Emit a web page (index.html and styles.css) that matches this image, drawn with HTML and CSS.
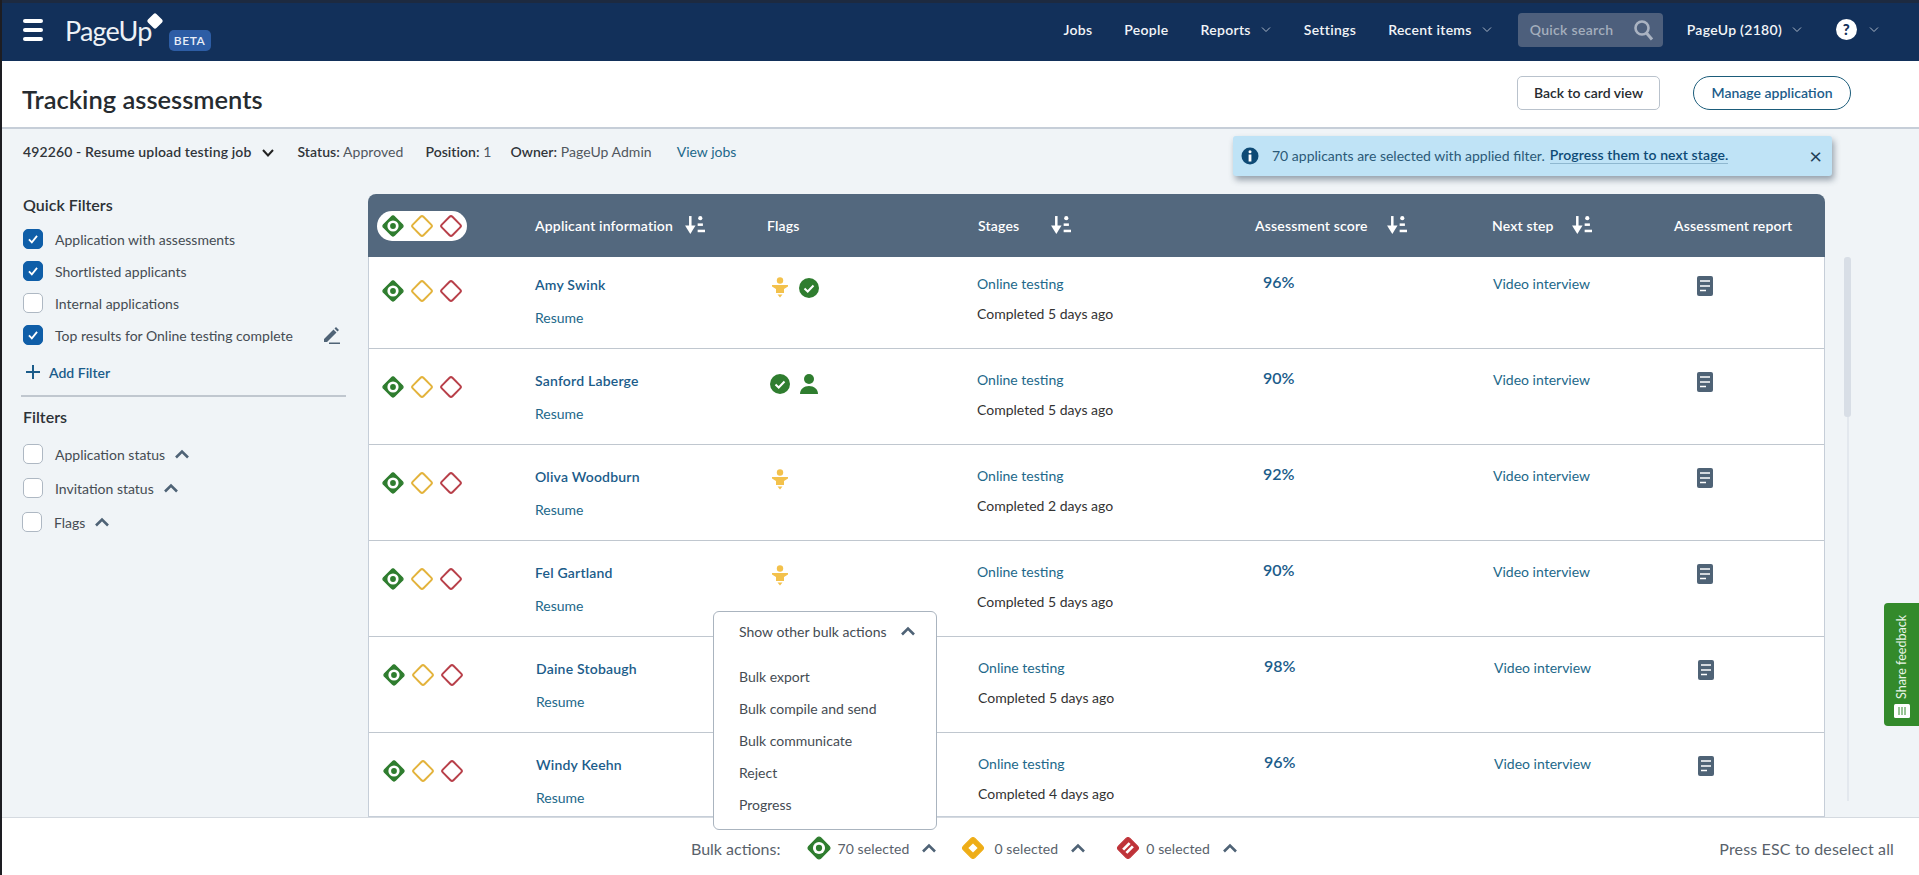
FILE: index.html
```html
<!DOCTYPE html>
<html lang="en">
<head>
<meta charset="utf-8">
<title>Tracking assessments</title>
<link rel="stylesheet" href="styles.css">
</head>
<body>
<svg class="defs" width="0" height="0" aria-hidden="true">
  <symbol id="d-green" viewBox="0 0 24 24"><rect x="4.2" y="4.2" width="15.6" height="15.6" rx="2.5" transform="rotate(45 12 12)" fill="#2f7d2f" stroke="#2f7d2f" stroke-width="1"/><circle cx="12" cy="12" r="5.6" fill="#fff"/><circle cx="12" cy="12" r="2.9" fill="#2f7d2f"/></symbol>
  <symbol id="d-yellow" viewBox="0 0 24 24"><rect x="4.5" y="4.5" width="15" height="15" rx="2" transform="rotate(45 12 12)" fill="#fff" stroke="#e3b33c" stroke-width="2"/></symbol>
  <symbol id="d-red" viewBox="0 0 24 24"><rect x="4.5" y="4.5" width="15" height="15" rx="2" transform="rotate(45 12 12)" fill="#fff" stroke="#b8404a" stroke-width="2"/></symbol>
  <symbol id="f-yellow" viewBox="0 0 24 24"><rect x="4.5" y="4.5" width="15" height="15" rx="2.5" transform="rotate(45 12 12)" fill="#eead17" stroke="#eead17"/><rect x="9" y="9" width="6" height="6" transform="rotate(45 12 12)" fill="#fff"/></symbol>
  <symbol id="f-red" viewBox="0 0 24 24"><rect x="4.5" y="4.5" width="15" height="15" rx="2.5" transform="rotate(45 12 12)" fill="#bf3339" stroke="#bf3339"/><path d="M7.5 13.5 13.5 7.5M10.5 16.5 16.5 10.5" stroke="#fff" stroke-width="2.6"/></symbol>
  <symbol id="sort" viewBox="0 0 20 20"><path d="M6 1v14" stroke="#fff" stroke-width="2.4"/><path d="M1 10 6 18l5-8z" fill="#fff"/><circle cx="15.500" cy="3" r="2" fill="#fff"/><rect x="13" y="8" width="5" height="2.400" fill="#fff"/><rect x="13" y="14" width="7" height="2.400" fill="#fff"/></symbol>
  <symbol id="up" viewBox="0 0 16 10"><path d="M2 8.500 8 2.500l6 6" fill="none" stroke="#4f6376" stroke-width="2.600"/></symbol>
  <symbol id="down" viewBox="0 0 10 7"><path d="M1 1.500 5 5.500l4-4" fill="none" stroke="#aab6c6" stroke-width="1"/></symbol>
  <symbol id="tick" viewBox="0 0 22 22"><circle cx="11" cy="11" r="10" fill="#2f7d2f"/><path d="M6.500 11.500 9.700 14.500 15.500 8.500" fill="none" stroke="#fff" stroke-width="2"/></symbol>
  <symbol id="person" viewBox="0 0 22 22"><circle cx="11" cy="6" r="5" fill="#2f7d2f"/><path d="M2 21c0-5 4-8 9-8s9 3 9 8z" fill="#2f7d2f"/></symbol>
  <symbol id="pin" viewBox="0 0 22 22"><circle cx="11" cy="3.500" r="3.200" fill="#f3c14b"/><path d="M3 8h16v1.500l-4 2.500v4H7v-4L3 9.500z" fill="#f3c14b"/><path d="M8.500 17.500h5l-2.500 3z" fill="#f3c14b"/></symbol>
  <symbol id="doc" viewBox="0 0 16 20"><rect width="16" height="20" rx="2" fill="#4f6376"/><path d="M3 5h10M3 10h10M3 14.500h6" stroke="#fff" stroke-width="1.500"/></symbol>
  <symbol id="check" viewBox="0 0 20 20"><path d="M5.500 10.500 8.700 13.700 14.500 6.500" fill="none" stroke="#fff" stroke-width="2"/></symbol>
</svg>

<div class="app">
  <header class="topbar">
    <div class="burger"><span></span><span></span><span></span></div>
    <div class="logo"><span class="logo-text">PageUp</span><span class="logo-dot"></span></div>
    <span class="beta">BETA</span>
    <nav class="nav">
      <a class="nav-link n-jobs">Jobs</a>
      <a class="nav-link n-people">People</a>
      <a class="nav-link n-reports">Reports<svg class="nav-chev"><use href="#down"/></svg></a>
      <a class="nav-link n-settings">Settings</a>
      <a class="nav-link n-recent">Recent items<svg class="nav-chev"><use href="#down"/></svg></a>
      <div class="search"><span>Quick search</span>
        <svg class="search-ico" viewBox="0 0 22 22"><circle cx="9" cy="9" r="6.500" fill="none" stroke="#aab3c2" stroke-width="2.600"/><path d="M13.500 14 19 20.500" stroke="#aab3c2" stroke-width="3"/></svg>
      </div>
      <a class="nav-link n-acct">PageUp (2180)<svg class="nav-chev"><use href="#down"/></svg></a>
      <span class="help">?</span><svg class="nav-chev help-chev"><use href="#down"/></svg>
    </nav>
  </header>

  <section class="titlebar">
    <h1>Tracking assessments</h1>
    <div class="title-actions">
      <button class="btn btn-plain">Back to card view</button>
      <button class="btn btn-outline">Manage application</button>
    </div>
  </section>

  <main class="main">
    <div class="jobrow">
      <b class="job-name">492260 - Resume upload testing job</b>
      <svg class="job-chev" viewBox="0 0 14 10"><path d="M2 2l5 5.500L12 2" fill="none" stroke="#222" stroke-width="2"/></svg>
      <span class="meta m-status"><b>Status:</b> Approved</span>
      <span class="meta m-pos"><b>Position:</b> 1</span>
      <span class="meta m-owner"><b>Owner:</b> PageUp Admin</span>
      <a class="link m-view">View jobs</a>
    </div>

    <div class="alert">
      <svg class="alert-ico" viewBox="0 0 18 18"><circle cx="9" cy="9" r="8.500" fill="#0d4a75"/><circle cx="9" cy="4.800" r="1.500" fill="#fff"/><rect x="7.600" y="7.500" width="2.800" height="7" fill="#fff"/></svg>
      <span class="alert-text">70 applicants are selected with applied filter.</span>
      <a class="alert-link">Progress them to next stage.</a>
      <span class="alert-x">×</span>
    </div>

    <div class="content">
      <aside class="sidebar">
        <h2 class="side-title">Quick Filters</h2>
        <div class="fil"><span class="cb on"><svg><use href="#check"/></svg></span>Application with assessments</div>
        <div class="fil"><span class="cb on"><svg><use href="#check"/></svg></span>Shortlisted applicants</div>
        <div class="fil"><span class="cb"></span>Internal applications</div>
        <div class="fil"><span class="cb on"><svg><use href="#check"/></svg></span>Top results for Online testing complete
          <svg class="pencil" viewBox="0 0 20 20"><path d="M3 14 12.500 4.500l3 3L6 17H3zM13.500 3.500l1.500-1.500 3 3-1.500 1.500z" fill="#4f6376"/><rect x="8" y="17.500" width="11" height="1.500" fill="#4f6376"/></svg>
        </div>
        <a class="add"><svg class="plus" viewBox="0 0 14 14"><path d="M7 0v14M0 7h14" stroke="#1b5c8a" stroke-width="2"/></svg>Add Filter</a>
        <hr class="divider">
        <h2 class="side-title t-filters">Filters</h2>
        <div class="fil f2"><span class="cb"></span>Application status<svg class="up"><use href="#up"/></svg></div>
        <div class="fil f2"><span class="cb"></span>Invitation status<svg class="up"><use href="#up"/></svg></div>
        <div class="fil f2 f-flags"><span class="cb"></span>Flags<svg class="up"><use href="#up"/></svg></div>
      </aside>

      <div class="table">
        <div class="thead">
          <div class="pill"><svg class="dia"><use href="#d-green"/></svg><svg class="dia"><use href="#d-yellow"/></svg><svg class="dia"><use href="#d-red"/></svg></div>
          <div class="th">Applicant information<svg class="sort s1"><use href="#sort"/></svg></div>
          <div class="th">Flags</div>
          <div class="th">Stages<svg class="sort s2"><use href="#sort"/></svg></div>
          <div class="th">Assessment score<svg class="sort s4"><use href="#sort"/></svg></div>
          <div class="th">Next step<svg class="sort s3"><use href="#sort"/></svg></div>
          <div class="th">Assessment report</div>
        </div>
        <div class="rows">
          <div class="row">
            <div class="c-dia"><svg class="dia"><use href="#d-green"/></svg><svg class="dia"><use href="#d-yellow"/></svg><svg class="dia"><use href="#d-red"/></svg></div>
            <div class="c-app"><a class="name">Amy Swink</a><a class="link resume">Resume</a></div>
            <div class="c-flags"><svg class="flag"><use href="#pin"/></svg><svg class="flag"><use href="#tick"/></svg></div>
            <div class="c-stage"><a class="link">Online testing</a><span class="done">Completed 5 days ago</span></div>
            <div class="c-score">96%</div>
            <div class="c-next"><a class="link">Video interview</a></div>
            <div class="c-doc"><svg class="doc"><use href="#doc"/></svg></div>
          </div>
          <div class="row">
            <div class="c-dia"><svg class="dia"><use href="#d-green"/></svg><svg class="dia"><use href="#d-yellow"/></svg><svg class="dia"><use href="#d-red"/></svg></div>
            <div class="c-app"><a class="name">Sanford Laberge</a><a class="link resume">Resume</a></div>
            <div class="c-flags"><svg class="flag"><use href="#tick"/></svg><svg class="flag"><use href="#person"/></svg></div>
            <div class="c-stage"><a class="link">Online testing</a><span class="done">Completed 5 days ago</span></div>
            <div class="c-score">90%</div>
            <div class="c-next"><a class="link">Video interview</a></div>
            <div class="c-doc"><svg class="doc"><use href="#doc"/></svg></div>
          </div>
          <div class="row">
            <div class="c-dia"><svg class="dia"><use href="#d-green"/></svg><svg class="dia"><use href="#d-yellow"/></svg><svg class="dia"><use href="#d-red"/></svg></div>
            <div class="c-app"><a class="name">Oliva Woodburn</a><a class="link resume">Resume</a></div>
            <div class="c-flags"><svg class="flag"><use href="#pin"/></svg></div>
            <div class="c-stage"><a class="link">Online testing</a><span class="done">Completed 2 days ago</span></div>
            <div class="c-score">92%</div>
            <div class="c-next"><a class="link">Video interview</a></div>
            <div class="c-doc"><svg class="doc"><use href="#doc"/></svg></div>
          </div>
          <div class="row">
            <div class="c-dia"><svg class="dia"><use href="#d-green"/></svg><svg class="dia"><use href="#d-yellow"/></svg><svg class="dia"><use href="#d-red"/></svg></div>
            <div class="c-app"><a class="name">Fel Gartland</a><a class="link resume">Resume</a></div>
            <div class="c-flags"><svg class="flag"><use href="#pin"/></svg></div>
            <div class="c-stage"><a class="link">Online testing</a><span class="done">Completed 5 days ago</span></div>
            <div class="c-score">90%</div>
            <div class="c-next"><a class="link">Video interview</a></div>
            <div class="c-doc"><svg class="doc"><use href="#doc"/></svg></div>
          </div>
          <div class="row row-shift">
            <div class="c-dia"><svg class="dia"><use href="#d-green"/></svg><svg class="dia"><use href="#d-yellow"/></svg><svg class="dia"><use href="#d-red"/></svg></div>
            <div class="c-app"><a class="name">Daine Stobaugh</a><a class="link resume">Resume</a></div>
            <div class="c-flags"></div>
            <div class="c-stage"><a class="link">Online testing</a><span class="done">Completed 5 days ago</span></div>
            <div class="c-score">98%</div>
            <div class="c-next"><a class="link">Video interview</a></div>
            <div class="c-doc"><svg class="doc"><use href="#doc"/></svg></div>
          </div>
          <div class="row row-shift">
            <div class="c-dia"><svg class="dia"><use href="#d-green"/></svg><svg class="dia"><use href="#d-yellow"/></svg><svg class="dia"><use href="#d-red"/></svg></div>
            <div class="c-app"><a class="name">Windy Keehn</a><a class="link resume">Resume</a></div>
            <div class="c-flags"></div>
            <div class="c-stage"><a class="link">Online testing</a><span class="done">Completed 4 days ago</span></div>
            <div class="c-score">96%</div>
            <div class="c-next"><a class="link">Video interview</a></div>
            <div class="c-doc"><svg class="doc"><use href="#doc"/></svg></div>
          </div>
        </div>
      </div>

      <div class="scroll"><div class="scroll-thumb"></div></div>
    </div>

    <div class="feedback"><svg class="fb-ico" viewBox="0 0 16 14"><rect width="16" height="14" rx="1.500" fill="#fff"/><path d="M5 3v8M8 3v8M11 3v8" stroke="#338a2b" stroke-width="1"/></svg><span>Share feedback</span></div>

    <div class="popover">
      <div class="pop-head">Show other bulk actions<svg class="up"><use href="#up"/></svg></div>
      <a class="pop-item">Bulk export</a>
      <a class="pop-item">Bulk compile and send</a>
      <a class="pop-item">Bulk communicate</a>
      <a class="pop-item">Reject</a>
      <a class="pop-item">Progress</a>
    </div>
  </main>

  <footer class="bulkbar">
    <span class="bulk-label">Bulk actions:</span>
    <svg class="bulk-dia"><use href="#d-green"/></svg><span class="bulk-count">70 selected</span><svg class="up bulk-up b-one"><use href="#up"/></svg>
    <svg class="bulk-dia"><use href="#f-yellow"/></svg><span class="bulk-count b-two">0 selected</span><svg class="up bulk-up b-three"><use href="#up"/></svg>
    <svg class="bulk-dia"><use href="#f-red"/></svg><span class="bulk-count">0 selected</span><svg class="up bulk-up"><use href="#up"/></svg>
    <span class="esc">Press ESC to deselect all</span>
  </footer>
</div>
</body>
</html>
```

FILE: styles.css
```css
* { box-sizing: border-box; }
html, body { margin: 0; height: 875px; overflow: hidden; }
body { font-family: "Lato", "Liberation Sans", sans-serif; font-size: 14px; color: #333; background: #f0f4f7; border-left: 2px solid #1d1d22; }
.defs { position: absolute; }
a { color: inherit; text-decoration: none; }
h1, h2 { margin: 0; }

.app { display: flex; flex-direction: column; height: 875px; }

/* top bar */
.topbar { flex: none; height: 61px; display: flex; align-items: center; background: #12305a; border-top: 3px solid #1d2a40; color: #fff; }
.burger { display: flex; flex-direction: column; gap: 5px; width: 20px; margin-left: 21px; margin-top: -4px; }
.burger span { height: 4px; border-radius: 2px; background: #fff; }
.logo { position: relative; margin-left: 22px; margin-top: -3px; }
.logo-text { font-size: 27px; font-weight: 400; letter-spacing: -0.8px; color: #eef2f6; }
.logo-dot { position: absolute; left: 84px; top: 1px; width: 12px; height: 12px; border-radius: 2px; background: #fff; transform: rotate(45deg); }
.beta { margin-left: 17px; margin-top: 16px; width: 42px; height: 21px; border-radius: 5px; background: #2d5da5; font-size: 12px; font-weight: 600; line-height: 21px; text-align: center; letter-spacing: 0.6px; color: #e8eef7; }
.nav { margin-left: auto; display: flex; align-items: center; margin-right: 40px; margin-top: -5px; letter-spacing: 0.3px; }
.nav-link { display: flex; align-items: center; font-weight: 600; font-size: 14px; color: #f2f5f8; }
.n-people { margin-left: 32px; }
.n-reports { margin-left: 32px; }
.n-settings { margin-left: 33px; }
.n-recent { margin-left: 32px; }
.n-acct { margin-left: 24px; }
.nav-chev { width: 10px; height: 7px; margin-left: 10px; }
.search { margin-left: 26px; width: 145px; height: 34px; border-radius: 4px; background: #4d5f7c; display: flex; align-items: center; justify-content: space-between; padding: 0 8px 0 12px; color: #a4aebd; font-weight: 600; }
.search-ico { width: 22px; height: 22px; }
.help { margin-left: 34px; width: 21px; height: 21px; border-radius: 50%; background: #fff; color: #12305a; font-weight: 900; font-size: 15px; line-height: 21px; text-align: center; }
.help-chev { margin-left: 12px; }

/* title */
.titlebar { flex: none; height: 68px; display: flex; align-items: center; justify-content: space-between; background: #fff; border-bottom: 2px solid #c6ced8; padding: 0 68px 0 20px; }
h1 { font-size: 25.500px; font-weight: 600; color: #262b30; margin-top: 9px; }
.title-actions { display: flex; gap: 33px; margin-top: -3px; }
.btn { height: 34px; font-family: inherit; font-size: 14px; font-weight: 600; background: #fff; }
.btn-plain { width: 143px; border: 1px solid #b9c2cc; border-radius: 5px; color: #262b30; }
.btn-outline { width: 158px; border: 1px solid #1b5c7a; border-radius: 17px; color: #1b5c8a; }

/* main */
.main { flex: 1; min-height: 0; position: relative; }
.jobrow { height: 65px; padding: 13px 0 0 21px; display: flex; align-items: flex-start; line-height: 20px; font-size: 14px; }
.job-name { font-weight: 600; color: #30353a; letter-spacing: 0.13px; }
.job-chev { width: 14px; height: 10px; margin: 6px 0 0 9px; }
.meta { color: #50575e; font-size: 14px; letter-spacing: 0.05px; }
.meta b { font-weight: 600; color: #30353a; }
.m-status { margin-left: 23px; }
.m-pos { margin-left: 22px; }
.m-owner { margin-left: 19px; }
.m-view { margin-left: 25px; }
.link { color: #22688a; }

.alert { position: absolute; left: 1231px; top: 7px; width: 599px; height: 40px; display: flex; align-items: center; background: #bfe3f6; border-radius: 3px; box-shadow: 2px 4px 6px rgba(40, 60, 80, .45); padding-left: 8px; color: #2b5a78; font-size: 14px; }
.alert-ico { width: 18px; height: 18px; }
.alert-text { margin-left: 13px; margin-top: -2px; }
.alert-link { margin-left: 5px; margin-top: -2px; font-weight: 600; color: #0d4a75; border-bottom: 1px solid #8fb8d0; line-height: 16px; letter-spacing: 0.1px; }
.alert-x { margin-left: auto; margin-right: 10px; font-size: 22px; color: #1f3f58; margin-top: -2px; }

.content { display: flex; align-items: flex-start; }

/* sidebar */
.sidebar { flex: none; width: 366px; padding-left: 21px; font-size: 14px; color: #454c53; margin-top: -1px; }
.side-title { font-size: 16px; font-weight: 600; color: #2c3136; line-height: 24px; margin-bottom: 6px; }
.fil { display: flex; align-items: center; height: 32px; position: relative; }
.cb { flex: none; width: 20px; height: 20px; border-radius: 5px; border: 1px solid #aeb8c3; background: #fff; margin-right: 12px; }
.cb.on { background: #0f5ea8; border-color: #0f5ea8; }
.cb svg { display: block; width: 18px; height: 18px; }
.pencil { position: absolute; left: 298px; top: 6px; width: 20px; height: 20px; }
.add { display: flex; align-items: center; height: 20px; margin: 11px 0 0 3px; font-weight: 600; color: #1b5c8a; }
.plus { width: 14px; height: 14px; margin-right: 9px; }
.divider { width: 325px; margin: 13px 0 0 -2px; border: 0; border-top: 2px solid #c0c7cf; }
.t-filters { margin: 8px 0 8px 0; }
.f2 { height: 34px; }
.f-flags { margin-left: -1px; }
.up { width: 16px; height: 10px; margin-left: 9px; }

/* table */
.table { flex: none; width: 1457px; }
.thead { height: 63px; display: grid; grid-template-columns: 167px 232px 211px 277px 237px 182px 1fr; align-items: center; background: #53687e; border-radius: 8px 8px 0 0; color: #fff; font-weight: 600; font-size: 14px; letter-spacing: 0.17px; }
.pill { width: 90px; height: 30px; margin-left: 9px; border-radius: 15px; background: #fff; display: flex; align-items: center; padding-left: 4px; gap: 5px; }
.dia { flex: none; width: 24px; height: 24px; }
.th { display: flex; align-items: center; white-space: nowrap; }
.sort { width: 21px; height: 21px; }
.s1 { margin-left: 11px; }
.s2 { margin-left: 31px; }
.s3 { margin-left: 17px; }
.s4 { margin-left: 18px; }
.rows { height: 560px; overflow: hidden; background: #fff; border-left: 1px solid #c6ced8; border-right: 1px solid #c6ced8; border-bottom: 1px solid #c6ced8; }
.row { height: 96px; display: grid; grid-template-columns: 166px 232px 210px 286px 230px 204px 1fr; border-bottom: 1px solid #c0c7cf; }
.row:first-child { margin-top: -4px; }
.row-shift { padding-left: 1px; }
.c-dia { display: flex; gap: 5px; padding: 26px 0 0 12px; height: 50px; }
.c-app, .c-stage { display: flex; flex-direction: column; align-items: flex-start; line-height: 20px; }
.c-app { padding-top: 22px; }
.name { font-weight: 600; color: #1b5c8a; letter-spacing: 0.2px; }
.resume { margin-top: 13px; }
.c-flags { display: flex; gap: 7px; padding: 24px 0 0 2px; }
.flag { width: 22px; height: 22px; }
.c-stage { padding-top: 21px; }
.done { margin-top: 10px; color: #333; }
.c-score { padding-top: 19px; line-height: 20px; font-size: 16px; font-weight: 600; color: #1b5c8a; }
.c-next { padding-top: 21px; line-height: 20px; }
.c-doc { padding-top: 23px; }
.doc { width: 16px; height: 20px; display: block; }

/* scrollbar */
.scroll { flex: none; width: 7px; height: 544px; margin: 63px 0 0 19px; display: flex; justify-content: center; position: relative; }
.scroll::before { content: ""; width: 2px; height: 100%; background: #e3e8ee; }
.scroll-thumb { position: absolute; top: 0; left: 0; width: 7px; height: 160px; border-radius: 3px; background: #d8dee6; }

/* overlays */
.feedback { position: absolute; right: 0; top: 474px; width: 35px; height: 123px; background: #338a2b; border-radius: 4px 0 0 4px; display: flex; flex-direction: column-reverse; align-items: center; padding: 9px 0 8px; color: #eaf5e8; font-size: 12.500px; gap: 5px; }
.feedback span { writing-mode: vertical-rl; transform: rotate(180deg); white-space: nowrap; }
.fb-ico { flex: none; width: 16px; height: 14px; }
.popover { position: absolute; left: 711px; top: 482px; width: 224px; height: 219px; background: #fff; border: 1px solid #aab4bf; border-radius: 6px; padding: 9px 0 0 25px; color: #454c53; }
.pop-head { display: flex; align-items: center; height: 20px; margin-bottom: 20px; }
.pop-head .up { margin-left: 13px; }
.pop-item { display: block; height: 32px; line-height: 20px; padding-top: 6px; }

/* bulk bar */
.bulkbar { flex: none; height: 58px; display: flex; align-items: center; background: #fff; border-top: 1px solid #d5dae0; padding: 3px 25px 0 689px; color: #59626b; font-size: 14px; letter-spacing: 0.1px; }
.bulk-label { font-size: 16px; margin-right: 26px; letter-spacing: 0; }
.bulk-dia { width: 26px; height: 26px; }
.bulk-count { margin-left: 5px; }
.b-two { margin-left: 8px; }
.bulk-up { margin: 0 20px 0 12px; }
.b-one { margin-right: 23px; }
.b-three { margin-right: 29px; }
.esc { margin-left: auto; font-size: 16px; letter-spacing: 0.15px; }
```
